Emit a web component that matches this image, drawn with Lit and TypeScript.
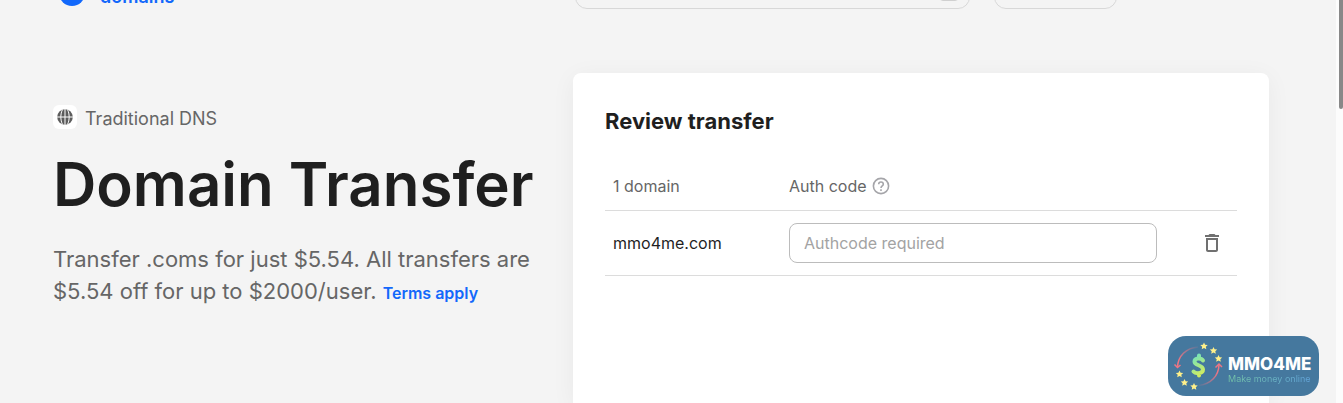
import { LitElement, html, css, svg } from "lit";
import { customElement } from "lit/decorators.js";

interface Transfer {
  domain: string;
}

const STARS: Array<[number, number]> = [
  [36, 10], [45.5, 14.5], [50.5, 22.5], [11.5, 38], [16.5, 46.5], [26, 50.5],
];

@customElement("brand-badge")
export class BrandBadge extends LitElement {
  static styles = css`
    :host {
      display: flex;
      align-items: center;
      box-sizing: border-box;
      width: 151px;
      height: 60px;
      border-radius: 18px;
      background: #45789e;
      color: #fff;
      font-family: Inter, "Liberation Sans", sans-serif;
    }
    .mark {
      flex: none;
      width: 60px;
      height: 60px;
    }
    .words {
      display: flex;
      flex-direction: column;
      white-space: nowrap;
      padding-top: 8px;
    }
    .name {
      font-size: 17px;
      line-height: 18px;
      font-weight: 800;
    }
    .motto {
      font-size: 9px;
      line-height: 12px;
      background: linear-gradient(90deg, #74c4a6, #62a4da);
      background-clip: text;
      -webkit-background-clip: text;
      color: transparent;
    }
  `;

  render() {
    return html`
      <svg class="mark" viewBox="0 0 60 60" aria-hidden="true">
        <defs>
          <linearGradient id="money" gradientUnits="userSpaceOnUse" x1="24" y1="20" x2="38" y2="40">
            <stop offset="0" stop-color="#6fe3c0" />
            <stop offset="1" stop-color="#e2ee4e" />
          </linearGradient>
          <linearGradient id="left" x1="0" y1="1" x2="1" y2="0">
            <stop offset="0.2" stop-color="#ee7583" />
            <stop offset="1" stop-color="#ee7583" stop-opacity="0.1" />
          </linearGradient>
          <linearGradient id="right" x1="1" y1="0" x2="0" y2="1">
            <stop offset="0.2" stop-color="#ee7583" />
            <stop offset="1" stop-color="#ee7583" stop-opacity="0.1" />
          </linearGradient>
        </defs>
        <path d="M9.5 31C10 20 18 12 30 11" fill="none" stroke="url(#left)" stroke-width="1.500" />
        <path d="M6.500 28.500l3 3 3-2.500" fill="none" stroke="#ee7583" stroke-width="1.500" />
        <path d="M51 29C50.500 40 43 48 31 49.500" fill="none" stroke="url(#right)" stroke-width="1.500" />
        <path d="M47.500 31.500l3.500-3.500 3 3" fill="none" stroke="#ee7583" stroke-width="1.500" />
        <path
          d="M35 24.500C33.500 21.800 26.500 21.500 26.500 25.500C26.500 30 35 28.500 35 33.500C35 38 27.500 38 25.500 35.500M31 19.500V22M31 37V39.500"
          fill="none" stroke="url(#money)" stroke-width="4" stroke-linejoin="round" stroke-linecap="round"
        />
        ${STARS.map(
          ([x, y]) => svg`<path transform=${`translate(${x} ${y})`} fill="#fff08a"
            d="M0-3.600L1.100-1.200L3.700-1L1.800.800L2.300 3.300L0 2L-2.300 3.300L-1.800.800L-3.700-1L-1.100-1.200Z" />`
        )}
      </svg>
      <div class="words">
        <span class="name">MMO4ME</span>
        <span class="motto">Make money online</span>
      </div>
    `;
  }
}

@customElement("app-root")
export class AppRoot extends LitElement {
  private transfers: Transfer[] = [{ domain: "mmo4me.com" }];

  static styles = css`
    :host {
      display: flex;
      height: 100vh;
      overflow: hidden;
      background: #fcfcfc;
      color: #1f1f1f;
      font-family: Inter, "Liberation Sans", sans-serif;
      font-size: 16px;
    }
    * {
      box-sizing: border-box;
    }
    .page {
      flex: 1;
      min-width: 0;
      display: flex;
      flex-direction: column;
      background: #f4f4f4;
      padding: 0 67px 0 53px;
    }
    .rail {
      flex: none;
      width: 7px;
      padding-left: 3px;
    }
    .thumb {
      height: 109px;
      background: #888;
      border-radius: 0 0 4px 4px;
    }
    .top {
      flex: none;
      display: grid;
      grid-template-columns: 522px 1fr;
      align-content: end;
      align-items: end;
      height: 9px;
      overflow: hidden;
    }
    .logo {
      display: flex;
      align-items: flex-end;
      gap: 15px;
      padding-left: 6px;
      margin-bottom: 3px;
      color: #1268fb;
      font-size: 18px;
      font-weight: 600;
      line-height: 18px;
      text-decoration: none;
    }
    .logo svg {
      width: 26px;
      height: 26px;
    }
    .tools {
      display: flex;
      gap: 24px;
    }
    .search {
      display: flex;
      align-items: center;
      width: 395px;
      height: 40px;
      padding: 0 10px 0 16px;
      border: 1px solid #d8d8d8;
      border-radius: 12px;
    }
    .search input {
      flex: 1;
      min-width: 0;
      border: 0;
      background: none;
    }
    .go {
      width: 20px;
      height: 24px;
      padding: 0;
      border: 1px solid #d0d0d0;
      border-radius: 4px;
      background: none;
    }
    .menu {
      width: 123px;
      height: 40px;
      border: 1px solid #d8d8d8;
      border-radius: 12px;
      background: none;
    }
    .main {
      flex: 1;
      display: grid;
      grid-template-columns: 520px 1fr;
      padding-top: 64px;
    }
    .kind {
      display: flex;
      align-items: flex-start;
      gap: 8px;
      margin-top: 32px;
      color: #666;
      font-size: 18px;
      line-height: 28px;
    }
    .tile {
      display: flex;
      width: 24px;
      height: 24px;
      border-radius: 6px;
      background: #fff;
    }
    h1 {
      margin: 15px 0 23px;
      font-size: 60px;
      line-height: 72px;
      font-weight: 600;
      white-space: nowrap;
    }
    .lead {
      margin: 0;
      padding-right: 32px;
      color: #666;
      font-size: 22px;
      line-height: 32px;
    }
    .terms {
      color: #1268fb;
      font-size: 16px;
      font-weight: 600;
      text-decoration: none;
    }
    .card {
      padding: 32px;
      border-radius: 8px 8px 0 0;
      background: #fff;
      box-shadow: 0 4px 24px #0000000d;
    }
    h2 {
      margin: 0;
      font-size: 22px;
      line-height: 32px;
      font-weight: 700;
    }
    table {
      width: 100%;
      margin-top: 25px;
      border-collapse: collapse;
      table-layout: fixed;
    }
    .c-name {
      width: 176px;
    }
    .c-act {
      width: 72px;
    }
    th,
    td {
      padding: 12px 8px;
      border-bottom: 1px solid #dcdcdc;
      text-align: left;
      line-height: 24px;
      font-weight: 400;
    }
    th {
      color: #666;
    }
    .auth {
      display: flex;
      align-items: center;
      gap: 4px;
    }
    .auth svg {
      width: 20px;
      height: 20px;
    }
    .code {
      display: block;
      width: 100%;
      height: 40px;
      padding: 0 14px;
      border: 1px solid #bcbcbc;
      border-radius: 8px;
      background: #fff;
      color: #1f1f1f;
      font: inherit;
    }
    .code::placeholder {
      color: #a3a3a3;
    }
    .trash {
      display: block;
      margin-left: auto;
      width: 34px;
      height: 24px;
      padding: 0 5px;
      border: 0;
      background: none;
    }
    .trash svg {
      display: block;
    }
    .badge {
      position: fixed;
      right: 24px;
      bottom: 7px;
    }
  `;

  render() {
    return html`
      <div class="page">
        <header class="top">
          <a class="logo" href="#">
            <svg viewBox="0 0 26 26" aria-hidden="true"><circle cx="13" cy="13" r="13" fill="#1268fb" /></svg>
            <span>domains</span>
          </a>
          <div class="tools">
            <div class="search">
              <input type="search" aria-label="Search domains" />
              <button class="go" aria-label="Search"></button>
            </div>
            <button class="menu" aria-label="Menu"></button>
          </div>
        </header>
        <main class="main">
          <section>
            <div class="kind">
              <span class="tile">
                <svg width="24" height="24" viewBox="0 0 24 24" aria-hidden="true">
                  <circle cx="12" cy="12" r="7.800" fill="#5c5c5c" />
                  <path
                    d="M4 12H20M12 4V20M9.500 4.500C7.300 9 7.300 15 9.500 19.500M14.500 4.500C16.700 9 16.700 15 14.500 19.500"
                    fill="none" stroke="#fff" stroke-width="1"
                  />
                </svg>
              </span>
              <span>Traditional DNS</span>
            </div>
            <h1>Domain Transfer</h1>
            <p class="lead">
              Transfer .coms for just $5.54. All transfers are $5.54 off for up to $2000/user.
              <a class="terms" href="#">Terms apply</a>
            </p>
          </section>
          <section class="card">
            <h2>Review transfer</h2>
            <table>
              <colgroup>
                <col class="c-name" />
                <col />
                <col class="c-act" />
              </colgroup>
              <thead>
                <tr>
                  <th scope="col">${this.transfers.length} domain</th>
                  <th scope="col">
                    <span class="auth">
                      Auth code
                      <svg viewBox="0 0 20 20" fill="none" stroke="#a5a5a9" stroke-width="1.600" aria-hidden="true">
                        <circle cx="10" cy="10" r="7.600" />
                        <path d="M7.700 8.200C7.700 5.200 12.300 5.200 12.300 8.200C12.300 10 10 9.900 10 12" />
                        <path d="M10 13.300V14.900" />
                      </svg>
                    </span>
                  </th>
                  <td></td>
                </tr>
              </thead>
              <tbody>
                ${this.transfers.map(
                  (t) => html`
                    <tr>
                      <td>${t.domain}</td>
                      <td>
                        <input class="code" type="text" placeholder="Authcode required" aria-label="Auth code for ${t.domain}" />
                      </td>
                      <td>
                        <button class="trash" aria-label="Remove ${t.domain}">
                          <svg width="24" height="24" viewBox="0 0 24 24" fill="#707070" aria-hidden="true">
                            <path d="M6 19c0 1.100.900 2 2 2h8c1.100 0 2-.900 2-2V7H6v12zM8 9h8v10H8V9zM15.500 4l-1-1h-5l-1 1H5v2h14V4h-3.500z" />
                          </svg>
                        </button>
                      </td>
                    </tr>
                  `
                )}
              </tbody>
            </table>
          </section>
        </main>
      </div>
      <div class="rail"><div class="thumb"></div></div>
      <brand-badge class="badge"></brand-badge>
    `;
  }
}
